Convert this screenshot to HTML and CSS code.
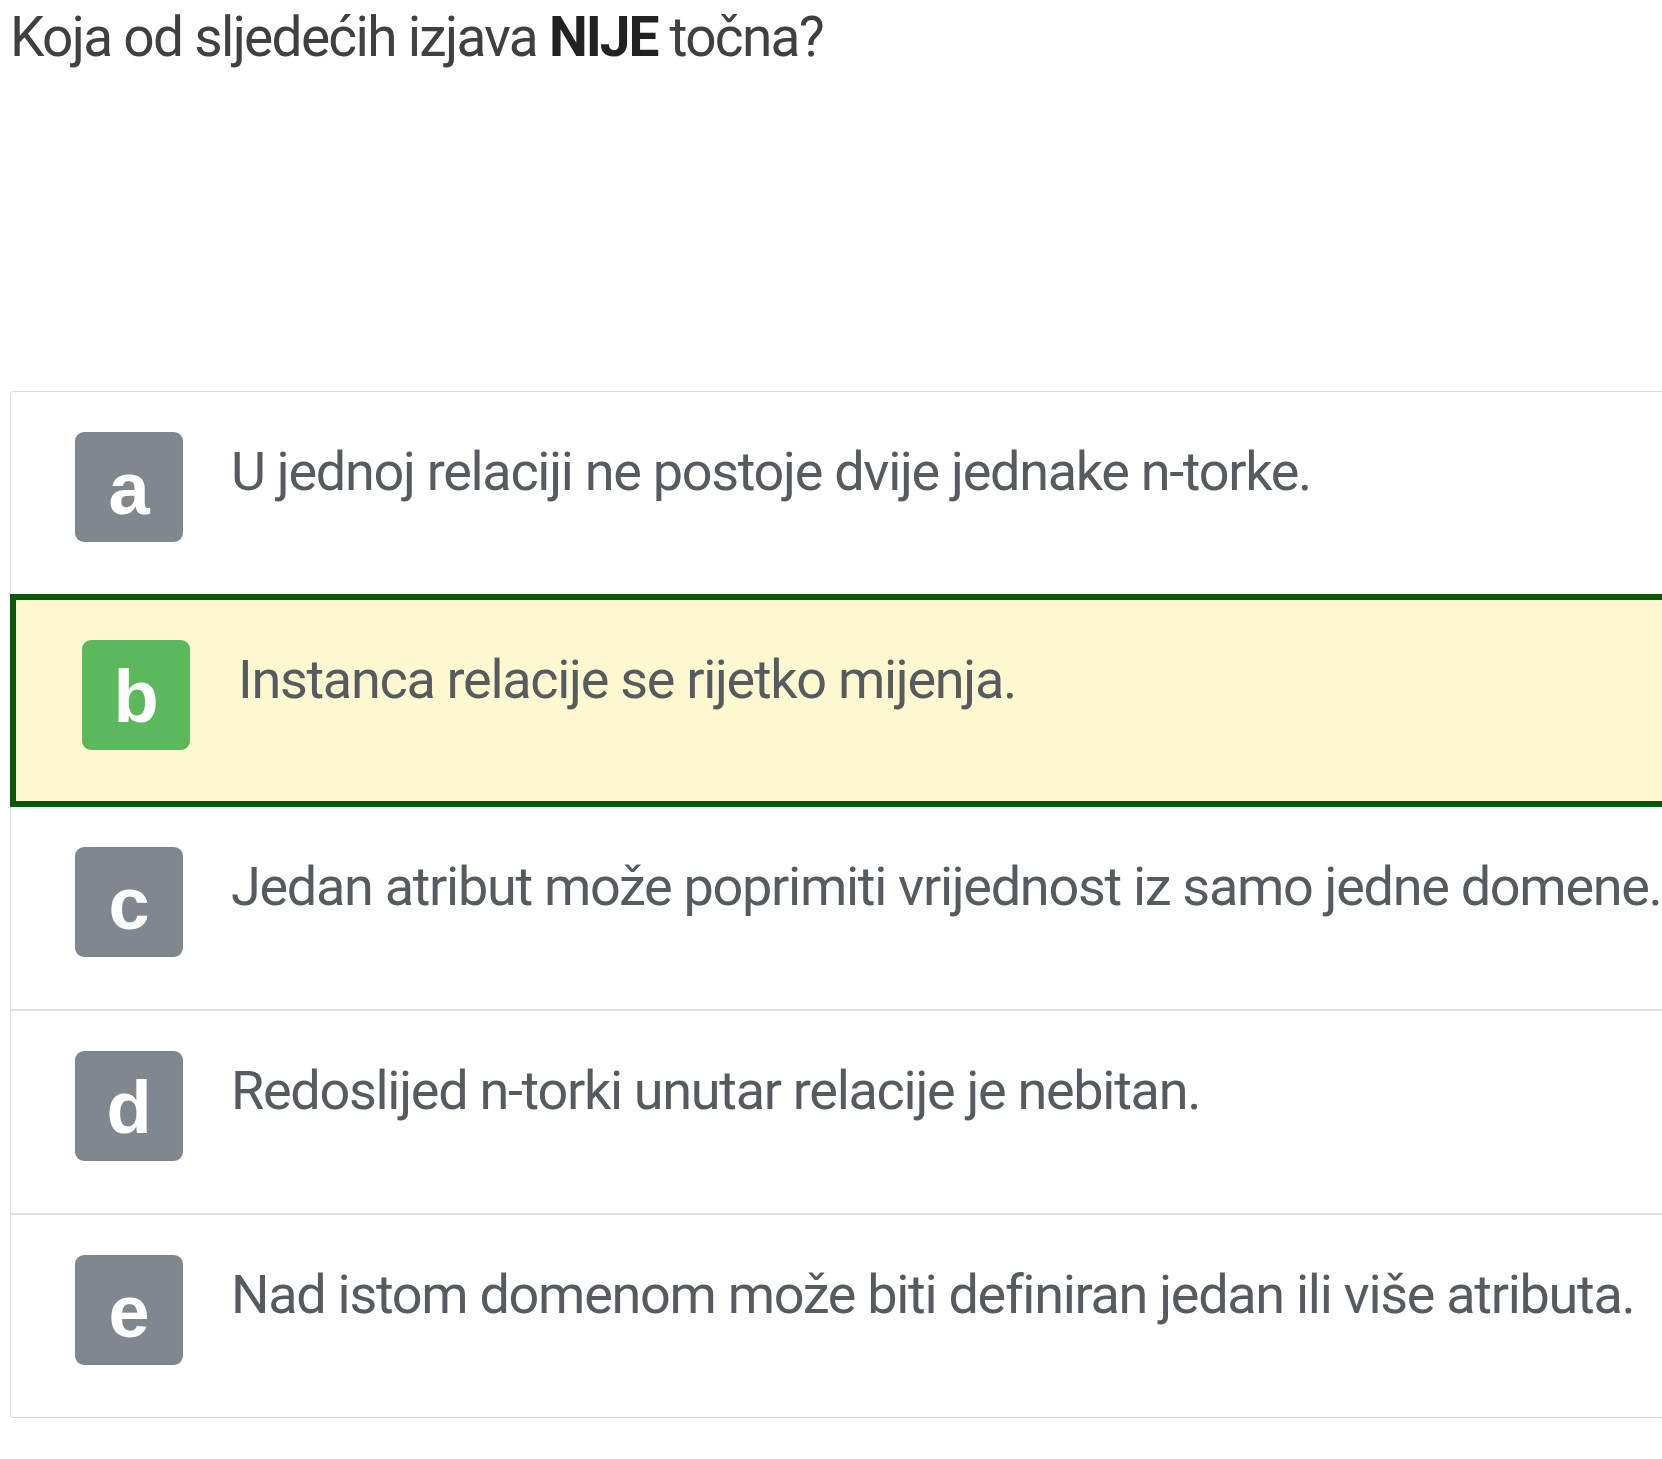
FILE: index.html
```html
<!DOCTYPE html>
<html lang="hr">
<head>
<meta charset="utf-8">
<title>Pitanje</title>
<link rel="stylesheet" href="styles.css">
</head>
<body>
<div class="page">
  <p class="question">Koja od sljedećih izjava <strong>NIJE</strong> točna?</p>
  <div class="answers">
    <div class="answer">
      <span class="badge">a</span>
      <span class="text">U jednoj relaciji ne postoje dvije jednake n-torke.</span>
    </div>
    <div class="answer selected">
      <span class="badge badge-ok">b</span>
      <span class="text">Instanca relacije se rijetko mijenja.</span>
    </div>
    <div class="answer">
      <span class="badge">c</span>
      <span class="text">Jedan atribut može poprimiti vrijednost iz samo jedne domene.</span>
    </div>
    <div class="answer">
      <span class="badge">d</span>
      <span class="text">Redoslijed n-torki unutar relacije je nebitan.</span>
    </div>
    <div class="answer">
      <span class="badge">e</span>
      <span class="text">Nad istom domenom može biti definiran jedan ili više atributa.</span>
    </div>
  </div>
</div>
</body>
</html>
```

FILE: styles.css
```css
html, body {
  margin: 0;
  padding: 0;
  background: #ffffff;
  overflow: hidden;
}

.page {
  padding: 0 0 0 10px;
  font-family: Roboto, "Liberation Sans", sans-serif;
}

.question {
  margin: 0;
  padding-top: 4px;
  font-size: 55px;
  line-height: 66px;
  letter-spacing: -1.7px;
  color: #404040;
}

.question strong {
  color: #222222;
  font-weight: 700;
  letter-spacing: -2px;
}

.answers {
  margin-top: 321px;
  width: 1720px;
  border: 1px solid #dcdcdc;
  border-radius: 3px;
  background: #ffffff;
}

.answer {
  display: flex;
  align-items: flex-start;
  gap: 48px;
  padding: 40px 64px 52px;
  border-top: 2px solid #e2e2e2;
}

.answer:first-child {
  border-top: none;
}

.answer.selected + .answer {
  border-top: none;
}

.answer.selected {
  margin: 0 0 0 -1px;
  padding: 40px 64px 51px 66px;
  border: 6px solid #075a07;
  background: #fdf8cf;
}

.badge {
  flex: none;
  width: 108px;
  height: 110px;
  border-radius: 9px;
  background: #80878f;
  color: #ffffff;
  font-family: "Liberation Sans", Arial, sans-serif;
  font-weight: 700;
  font-size: 74px;
  line-height: 110px;
  text-align: center;
  box-sizing: border-box;
  padding-top: 2px;
}

.badge-ok {
  background: #5cb85c;
}

.text {
  font-size: 54px;
  line-height: 76px;
  margin-top: 2px;
  letter-spacing: -1.3px;
  color: #575b60;
  white-space: nowrap;
}
```
